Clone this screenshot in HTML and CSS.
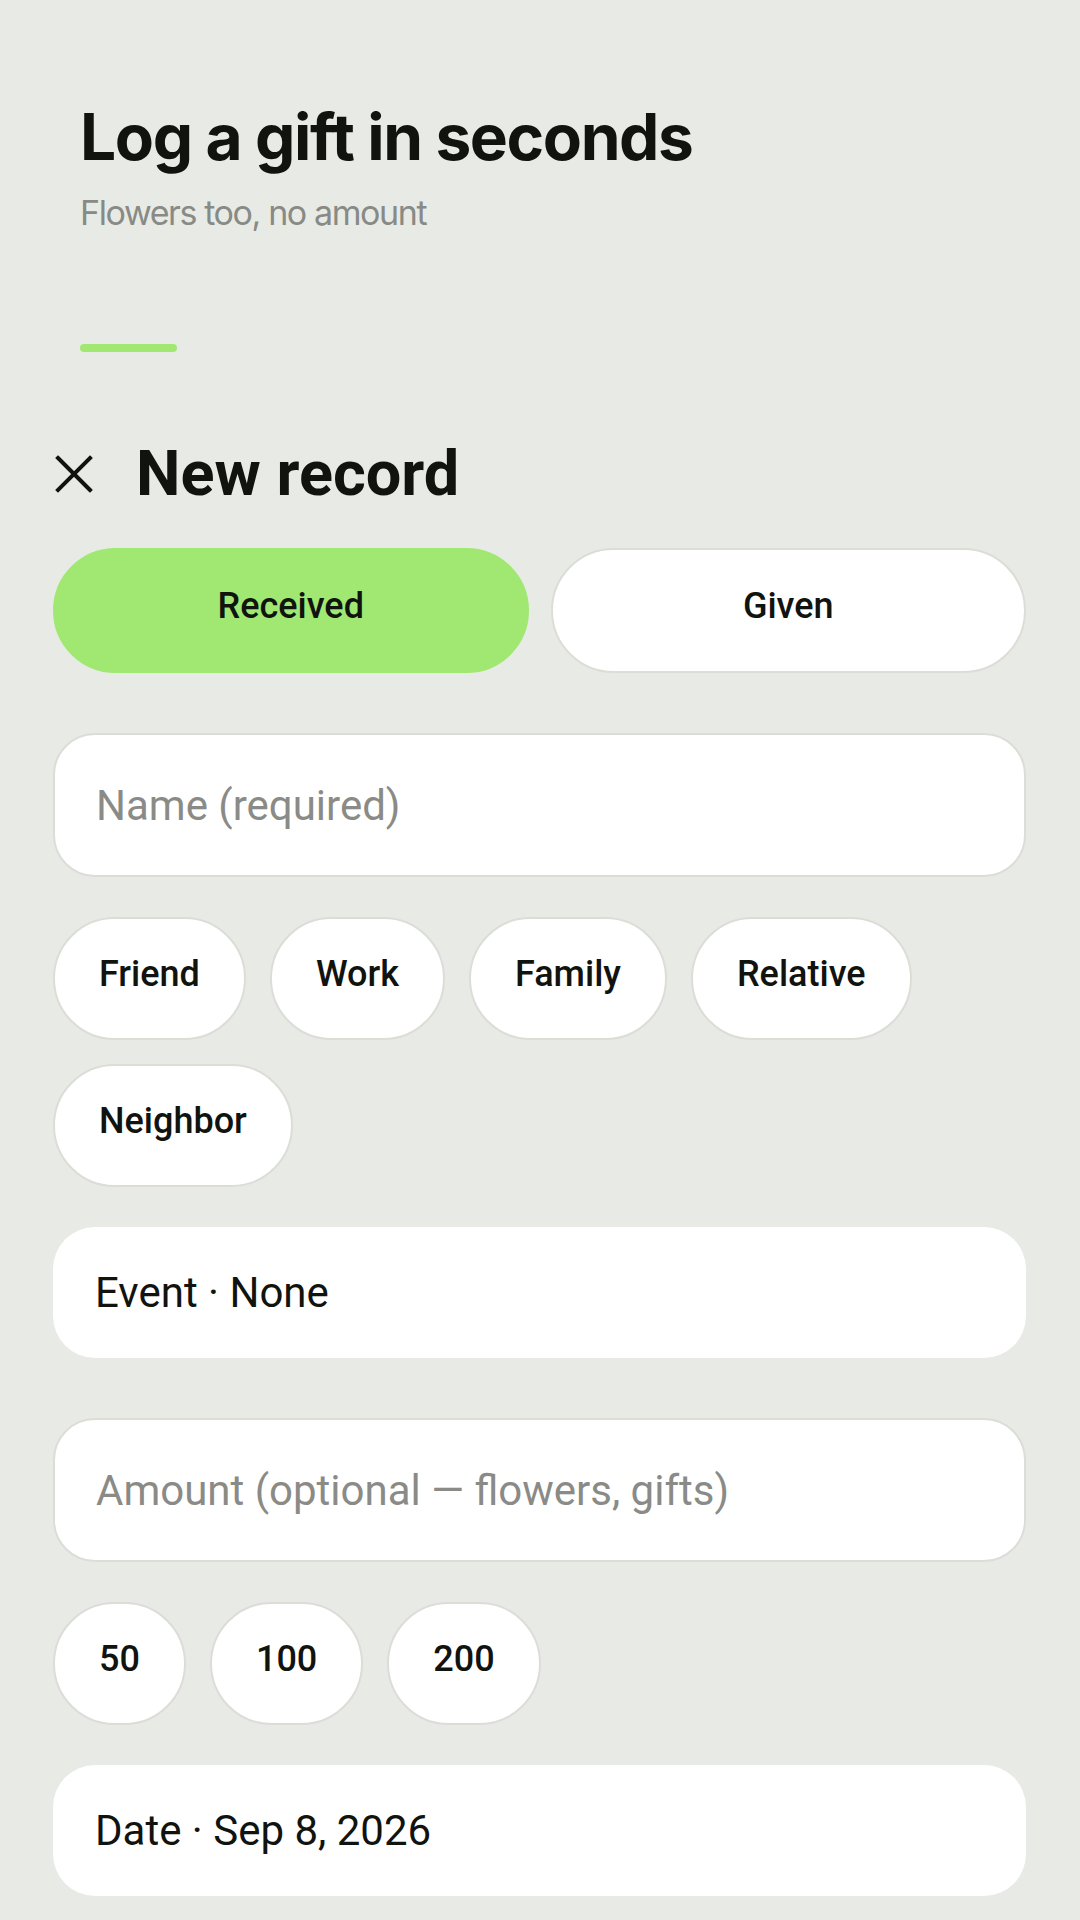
FILE: index.html
```html
<!DOCTYPE html>
<html lang="en">

<head>
    <meta charset="UTF-8">
    <meta name="viewport" content="width=device-width, initial-scale=1.0">
    <title>Gift log - new record</title>
    <link rel="stylesheet" href="styles.css">
</head>

<body>
    <div class="intro">
        <h1>Log a gift in seconds</h1>
        <p class="sub">Flowers too, no amount</p>
        <div class="bar"></div>
    </div>

    <div class="sheet">
        <div class="top">
            <button class="close" aria-label="Close">
                <svg width="38" height="38" viewBox="0 0 38 38">
                    <path d="M3 3 L35 35 M35 3 L3 35" stroke="#11130e" stroke-width="4" stroke-linecap="square" fill="none" />
                </svg>
            </button>
            <h2>New record</h2>
        </div>

        <div class="toggle">
            <button class="seg active">Received</button>
            <button class="seg">Given</button>
        </div>

        <input class="field gap-big" type="text" placeholder="Name (required)">

        <div class="chips">
            <button class="chip">Friend</button>
            <button class="chip">Work</button>
            <button class="chip">Family</button>
            <button class="chip">Relative</button>
            <button class="chip">Neighbor</button>
        </div>

        <div class="card">Event · None</div>

        <input class="field gap-big" type="text" placeholder="Amount (optional — flowers, gifts)">

        <div class="chips">
            <button class="chip">50</button>
            <button class="chip">100</button>
            <button class="chip">200</button>
        </div>

        <div class="card">Date · Sep 8, 2026</div>
    </div>
</body>

</html>
```

FILE: styles.css
```css
body {
    margin: 0;
    background-color: #e8eae5;
    color: #11130e;
    font-family: Roboto, "Liberation Sans", sans-serif;
}

button {
    font-family: inherit;
    color: inherit;
    cursor: pointer;
}

.intro {
    padding: 98px 80px 0;
}

.intro h1 {
    margin: 0;
    font-family: Inter, "Liberation Sans", sans-serif;
    font-size: 64px;
    font-weight: 700;
    line-height: 77px;
    letter-spacing: -1.4px;
}

.intro .sub {
    margin: 17px 0 0;
    font-family: Inter, "Liberation Sans", sans-serif;
    font-size: 34px;
    line-height: 41px;
    letter-spacing: -1.4px;
    color: #888a86;
}

.bar {
    margin-top: 111px;
    width: 97px;
    height: 8px;
    border-radius: 4px;
    background-color: #a0e872;
}

.sheet {
    padding: 0 54px 0 53px;
}

.top {
    margin-top: 83px;
    display: flex;
    align-items: center;
    height: 78px;
}

.close {
    border: none;
    background: none;
    padding: 0;
    width: 38px;
    height: 38px;
    margin-left: 2px;
    display: flex;
}

.top h2 {
    margin: 0 0 0 43px;
    font-size: 63px;
    font-weight: 700;
    line-height: 78px;
}

.toggle {
    margin-top: 35px;
    display: flex;
    gap: 22px;
}

.seg {
    flex: 1;
    height: 125px;
    padding: 0 0 10px;
    border: 2px solid #dcddd7;
    border-radius: 63px;
    background-color: #fff;
    font-size: 36px;
    font-weight: 500;
}

.seg.active {
    background-color: #a0e872;
    border-color: #a0e872;
}

.field {
    display: block;
    box-sizing: border-box;
    width: 100%;
    height: 144px;
    margin: 0;
    padding: 0 41px;
    border: 2px solid #dcddd7;
    border-radius: 42px;
    background-color: #fff;
    font-family: inherit;
    font-size: 42px;
    color: #11130e;
    outline: none;
}

.field::placeholder {
    color: #8a8b87;
}

.gap-big {
    margin-top: 60px;
}

.chips {
    margin-top: 40px;
    display: flex;
    flex-wrap: wrap;
    gap: 24px;
}

.chip {
    height: 123px;
    padding: 0 44px 10px;
    border: 2px solid #dcddd7;
    border-radius: 62px;
    background-color: #fff;
    font-size: 36px;
    font-weight: 500;
}

.card {
    margin-top: 40px;
    height: 131px;
    padding: 0 42px;
    border-radius: 42px;
    background-color: #fff;
    display: flex;
    align-items: center;
    font-size: 42px;
}
```
